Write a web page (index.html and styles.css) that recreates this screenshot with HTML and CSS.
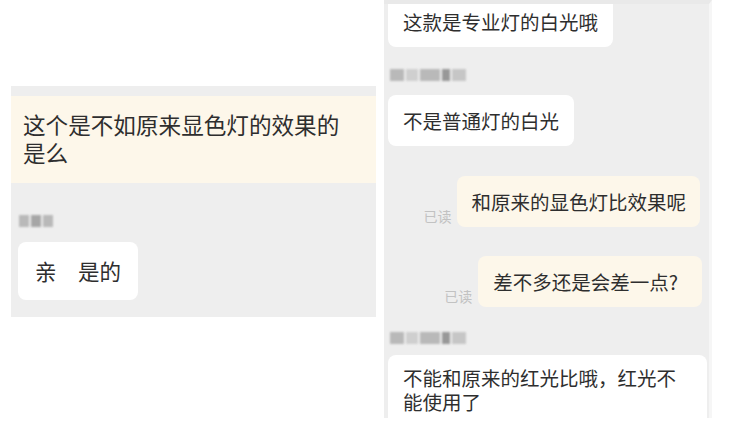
FILE: index.html
```html
<!DOCTYPE html>
<html lang="zh-CN">
    <head>
        <meta charset="utf-8"/>
        <title>聊天记录</title>
        <link rel="stylesheet" href="styles.css">
    </head>
    <body>
        <!-- Left shot -->
        <div class="shot shot-left">
            <div class="quote">这个是不如原来显色灯的效果的<br>是么</div>
            <div class="name name-short"><span></span><span></span><span></span></div>
            <div class="bubble bubble-big">亲　是的</div>
        </div>

        <!-- Right shot -->
        <div class="shot shot-right">
            <div class="bubble b1">这款是专业灯的白光哦</div>
            <div class="name name-long n1"><span></span><span></span><span></span><span></span><span></span></div>
            <div class="bubble b2">不是普通灯的白光</div>
            <div class="mine r1">
                <span class="read">已读</span>
                <div class="bubble cream">和原来的显色灯比效果呢</div>
            </div>
            <div class="mine r2">
                <span class="read">已读</span>
                <div class="bubble cream wide">差不多还是会差一点?</div>
            </div>
            <div class="name name-long n2"><span></span><span></span><span></span><span></span><span></span></div>
            <div class="bubble b5">不能和原来的红光比哦，红光不<br>能使用了</div>
        </div>
    </body>
</html>
```

FILE: styles.css
```css
body {
    margin: 0;
    background-color: #ffffff;
    display: flex;
    align-items: flex-start;
    height: 422px;
    overflow: hidden;
    font-family: "Noto Sans CJK SC", "Noto Sans", sans-serif;
    color: #2e2e2e;
}

.shot {
    background-color: #eeeeee;
    display: flex;
    flex-direction: column;
    align-items: flex-start;
}

.shot-left {
    margin: 86px 0 0 11px;
    width: 365px;
    height: 231px;
    padding-top: 10px;
    box-sizing: border-box;
}

.shot-right {
    margin-left: 8px;
    width: 328px;
    height: 418px;
    padding: 0 0 0 4px;
    box-sizing: border-box;
    overflow: hidden;
    border-top: 4px solid #e9e9e9;
    border-right: 3px solid #f6f6f6;
}

.quote {
    align-self: stretch;
    background-color: #fdf7ea;
    font-size: 22.6px;
    line-height: 28px;
    padding: 15px 12px 16px;
}

.bubble {
    background-color: #ffffff;
    border-radius: 8px;
    font-size: 19.5px;
    line-height: 27px;
    padding: 12px 15px;
    white-space: nowrap;
}

.bubble-big {
    margin: 15px 0 0 7px;
    font-size: 21.5px;
    line-height: 30px;
    padding: 14px 17px;
}

.cream {
    background-color: #fdf7ea;
}

.wide {
    padding-right: 24px;
}

.name {
    display: flex;
    gap: 2px;
    filter: blur(1.3px);
    opacity: 0.85;
}

.name span {
    display: block;
    height: 12px;
    background-color: #b0b0b0;
}

.name-short {
    margin: 32px 0 0 8px;
}

.name-short span { width: 10px; }
.name-short span:nth-child(2) { background-color: #9a9a9a; }

.name-long span:nth-child(1) { width: 14px; }
.name-long span:nth-child(2) { width: 12px; background-color: #cacaca; }
.name-long span:nth-child(3) { width: 20px; }
.name-long span:nth-child(4) { width: 8px; background-color: #8a8a8a; }
.name-long span:nth-child(5) { width: 14px; background-color: #c0c0c0; }

.b1 {
    margin-top: -8px;
}

.n1 {
    margin: 22px 0 0 2px;
}

.b2 {
    margin-top: 14px;
}

.mine {
    align-self: stretch;
    display: flex;
    justify-content: flex-end;
    align-items: flex-end;
    gap: 6px;
}

.r1 {
    margin-top: 30px;
    padding-right: 9px;
}

.r1 .bubble {
    padding: 12px 14px;
}

.r2 {
    margin-top: 29px;
    padding-right: 7px;
}

.read {
    font-size: 14px;
    line-height: 18px;
    color: #c2c2c2;
    padding-bottom: 2px;
}

.n2 {
    margin: 25px 0 0 2px;
}

.b5 {
    margin-top: 11px;
    align-self: stretch;
    margin-right: 2px;
    line-height: 24px;
    padding-top: 11px;
}
```
